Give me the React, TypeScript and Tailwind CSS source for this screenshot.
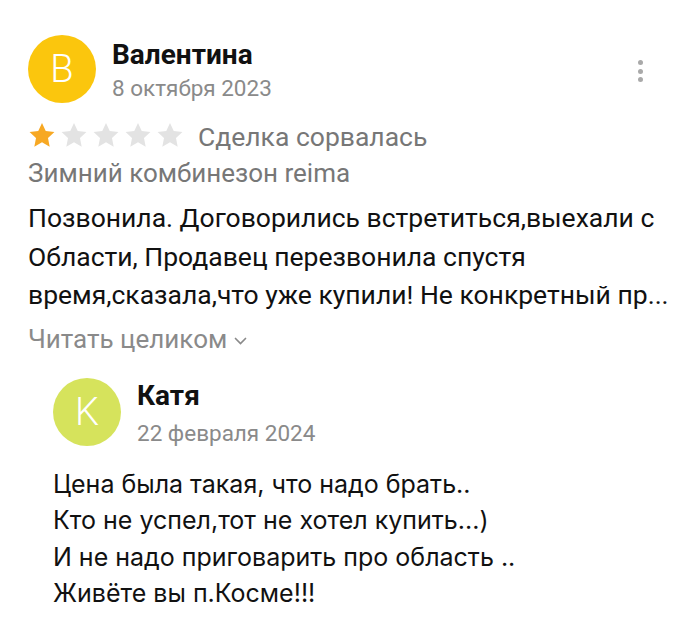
import React from 'react'

const font = { fontFamily: 'Roboto, "Noto Sans", sans-serif' }
const inter = { fontFamily: 'Inter, Roboto, sans-serif' }

function Star({ filled }: { filled: boolean }) {
  return (
    <svg width="28" height="26" viewBox="0 0 24 23" className="shrink-0">
      <path
        d="M12 0.8l3.3 7.1 7.7 0.9-5.7 5.3 1.5 7.7L12 17.9l-6.8 3.9 1.5-7.7L1 8.8l7.7-0.9z"
        fill={filled ? '#f7a823' : '#e3e3e3'}
      />
    </svg>
  )
}

function Avatar({ letter, color }: { letter: string; color: string }) {
  return (
    <div className={`w-[68px] h-[68px] rounded-full flex items-center justify-center shrink-0 ${color}`}>
      <span className="text-white text-[38px] font-light leading-none">{letter}</span>
    </div>
  )
}

export default function App() {
  return (
    <div className="w-[700px] h-[640px] bg-white overflow-hidden pl-[28px] pr-[28px] pt-[35px]" style={font}>
      <div className="flex items-start">
        <Avatar letter="B" color="bg-[#fbc60d]" />
        <div className="ml-[16px] mt-[4px] flex flex-col">
          <span className="text-[28px] font-bold leading-[32px] text-[#111]">Валентина</span>
          <span className="text-[22.5px] leading-[34px] text-[#8a8a8a]">8 октября 2023</span>
        </div>
        <div className="ml-auto mr-[29px] mt-[25px] flex flex-col gap-[3.5px]">
          <span className="w-[5px] h-[5px] rounded-full bg-[#a9a9a9]" />
          <span className="w-[5px] h-[5px] rounded-full bg-[#a9a9a9]" />
          <span className="w-[5px] h-[5px] rounded-full bg-[#a9a9a9]" />
        </div>
      </div>

      <div className="flex items-center mt-[13px] h-[34px]">
        <div className="flex gap-[4px]">
          <Star filled />
          <Star filled={false} />
          <Star filled={false} />
          <Star filled={false} />
          <Star filled={false} />
        </div>
        <span className="ml-[14px] mt-[3px] text-[26.5px] leading-[34px] text-[#777]">Сделка сорвалась</span>
      </div>

      <div className="mt-[3px] text-[26px] leading-[36px] text-[#777]">Зимний комбинезон reima</div>

      <p className="mt-[8px] text-[26.5px] leading-[38.5px] text-[#111] whitespace-nowrap">
        Позвонила. Договорились встретиться,выехали с<br />
        Области, Продавец перезвонила спустя<br />
        время,сказала,что уже купили! Не конкретный пр...
      </p>

      <button className="mt-[6px] flex items-center gap-[7px] text-[26px] leading-[36px] text-[#8a8a8a]">
        Читать целиком
        <svg width="13" height="8" viewBox="0 0 13 8" className="mt-[5px]">
          <path d="M1.5 1.5l5 5 5-5" stroke="#8a8a8a" strokeWidth="1.7" fill="none" strokeLinecap="round" />
        </svg>
      </button>

      <div className="pl-[25px] mt-[21px]">
        <div className="flex items-start">
          <Avatar letter="K" color="bg-[#d6e35c]" />
          <div className="ml-[16px] mt-[2px] flex flex-col">
            <span className="text-[28px] font-bold leading-[32px] text-[#111]">Катя</span>
            <span className="mt-[4px] text-[22.5px] leading-[34px] text-[#8a8a8a]">22 февраля 2024</span>
          </div>
        </div>
        <p className="mt-[16px] text-[25px] leading-[36.5px] text-[#111]" style={inter}>
          Цена была такая, что надо брать..<br />
          Кто не успел,тот не хотел купить...)<br />
          И не надо приговарить про область ..<br />
          Живёте вы п.Косме!!!
        </p>
      </div>
    </div>
  )
}
